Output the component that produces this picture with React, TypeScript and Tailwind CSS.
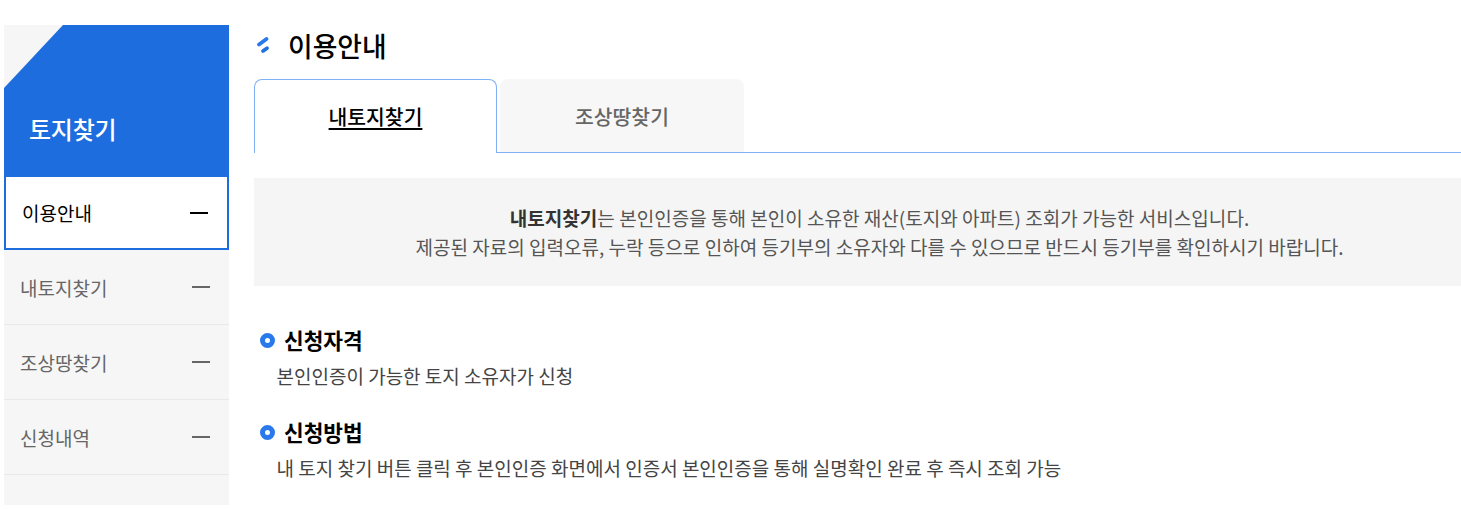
const F = "font-['Noto_Sans_CJK_KR','Noto_Sans',sans-serif]";

function Side({ label, active }: { label: string; active?: boolean }) {
  if (active) {
    return (
      <div className="h-[75px] flex items-center justify-between bg-white border-2 border-[#1e6ddf] pl-[16px] pr-[19px] text-[19px] text-black">
        <span className="mt-[2px]">{label}</span>
        <span className="block w-[18px] h-[2px] bg-black" />
      </div>
    );
  }
  return (
    <div className="h-[75px] flex items-center justify-between border-b border-[#e9e9e9] pl-[16px] pr-[19px] text-[19px] text-[#666]">
      <span className="mt-[2px]">{label}</span>
      <span className="block w-[18px] h-[2px] bg-[#666]" />
    </div>
  );
}

function Section({ title, body }: { title: string; body: string }) {
  return (
    <div className="flex flex-col">
      <div className="flex items-center h-[28px] pl-[6px] gap-[9px]">
        <span className="block w-[15px] h-[15px] rounded-full border-[5px] border-[#2979ec] bg-white" />
        <span className="text-[21.4px] font-bold text-black leading-[28px]">{title}</span>
      </div>
      <p className="pl-[22.5px] mt-[8px] text-[19px] leading-[28px] text-[#444]">{body}</p>
    </div>
  );
}

export default function App() {
  return (
    <div className={`${F} w-[1461px] h-[510px] bg-white overflow-hidden flex pl-[4px] pt-[25px]`}>
      <aside className="w-[225px] h-[480px] bg-[#f6f6f6] shrink-0 flex flex-col">
        <div className="h-[150px] bg-[#1e6ddf] [clip-path:polygon(59px_0,100%_0,100%_100%,0_100%,0_63px)] flex items-end pl-[25px] pb-[28px]">
          <span className="text-[24px] font-medium text-white leading-[36px] tracking-[-0.25px]">토지찾기</span>
        </div>
        <Side label="이용안내" active />
        <Side label="내토지찾기" />
        <Side label="조상땅찾기" />
        <Side label="신청내역" />
      </aside>
      <main className="ml-[25px] flex-1 min-w-0 flex flex-col">
        <div className="flex items-center h-[42px] gap-[16px]">
          <svg width="18" height="18" viewBox="0 0 18 18" fill="none">
            <path d="M5 7.5 L12.5 2" stroke="#2979ec" strokeWidth="3.8" strokeLinecap="round" />
            <path d="M9 14 L13 11.2" stroke="#2272e0" strokeWidth="3.8" strokeLinecap="round" />
          </svg>
          <h1 className="text-[26.8px] font-medium text-black leading-[42px]">이용안내</h1>
        </div>
        <div className="mt-[12px] flex h-[74px] border-b border-[#7fb0f5] items-end">
          <div className="w-[243px] h-[74px] -mb-px bg-white border border-b-0 border-[#7fb0f5] rounded-t-[8px] flex items-center justify-center pb-[1px]">
            <span className="text-[20.4px] font-medium text-black underline underline-offset-[3px] leading-[28px]">내토지찾기</span>
          </div>
          <div className="ml-[3px] w-[244px] h-[73px] bg-[#f7f7f7] rounded-t-[8px] flex items-center justify-center">
            <span className="text-[20.4px] font-medium text-[#666] leading-[28px]">조상땅찾기</span>
          </div>
        </div>
        <div className="mt-[25px] h-[108px] bg-[#f5f5f5] pl-[44px] flex flex-col items-center justify-center text-[19.04px] leading-[29px] text-[#555]">
          <p><b className="font-bold text-[#333]">내토지찾기</b>는 본인인증을 통해 본인이 소유한 재산(토지와 아파트) 조회가 가능한 서비스입니다.</p>
          <p>제공된 자료의 입력오류, 누락 등으로 인하여 등기부의 소유자와 다를 수 있으므로 반드시 등기부를 확인하시기 바랍니다.</p>
        </div>
        <div className="mt-[40px] flex flex-col gap-[28px]">
          <Section title="신청자격" body="본인인증이 가능한 토지 소유자가 신청" />
          <Section title="신청방법" body="내 토지 찾기 버튼 클릭 후 본인인증 화면에서 인증서 본인인증을 통해 실명확인 완료 후 즉시 조회 가능" />
        </div>
      </main>
    </div>
  );
}
